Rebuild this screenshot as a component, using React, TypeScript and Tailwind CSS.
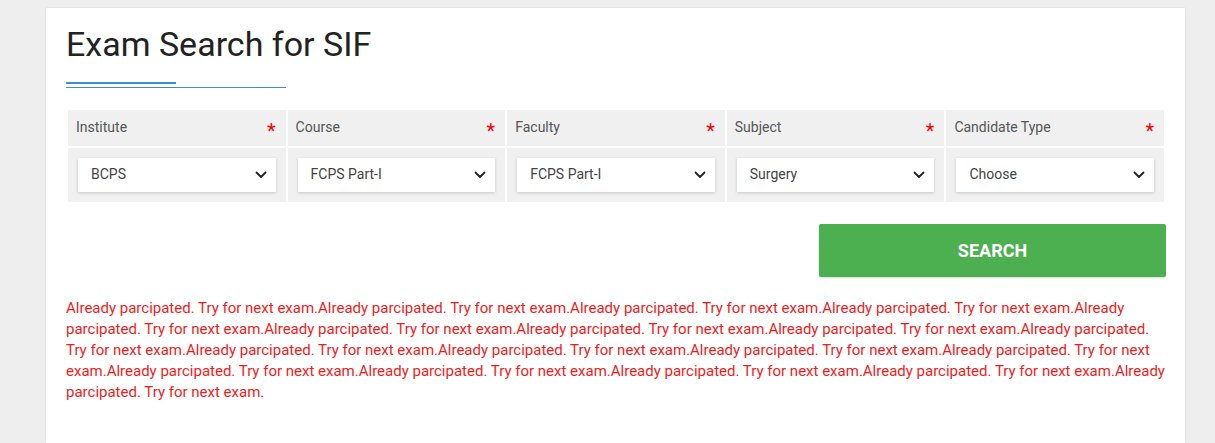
import React from "react";

const cols = [
  { label: "Institute", value: "BCPS" },
  { label: "Course", value: "FCPS Part-I" },
  { label: "Faculty", value: "FCPS Part-I" },
  { label: "Subject", value: "Surgery" },
  { label: "Candidate Type", value: "Choose" },
];

const msg = "Already parcipated. Try for next exam.".repeat(18);

function Chevron() {
  return (
    <svg width="12" height="8" viewBox="0 0 12 8" fill="none">
      <path d="M1.5 1.5 L6 6 L10.5 1.5" stroke="#222" strokeWidth="1.8" strokeLinecap="round" strokeLinejoin="round" />
    </svg>
  );
}

export default function App() {
  return (
    <div className="w-[1215px] h-[443px] bg-[#eeeeee] overflow-hidden" style={{ fontFamily: "Roboto, 'Liberation Sans', sans-serif" }}>
      <div className="ml-[46px] mt-[8px] w-[1139px] h-[435px] bg-white shadow-[0_0_2px_rgba(0,0,0,0.12)] pl-[20px] pr-[19px] pt-[16px]">
        <h1 className="text-[34px] leading-[40px] text-[#222] font-normal">Exam Search for SIF</h1>
        <div className="mt-[18px] flex flex-col">
          <div className="w-[110px] h-[1.5px] bg-[#3a8fd0]" />
          <div className="mt-[3px] w-[220px] h-[1.5px] bg-[#3a8fd0]" />
        </div>
        <div className="mt-[22px] ml-[2px] w-[1096px] grid grid-cols-5 gap-[2px]">
          {cols.map((c) => (
            <div key={c.label} className="h-[36px] bg-[#f0f0f0] flex items-center justify-between pl-[8px] pr-[10px] pb-[1px]">
              <span className="text-[14px] text-[#555]">{c.label}</span>
              <span className="text-[20px] leading-none text-[#ff0000] mt-[6px]">*</span>
            </div>
          ))}
          {cols.map((c) => (
            <div key={c.label + "v"} className="h-[54px] bg-[#f0f0f0] px-[10px] py-[10px]">
              <div className="h-[34px] bg-white shadow-[0_1px_3px_rgba(0,0,0,0.18)] flex items-center justify-between pl-[13px] pr-[9px] pb-[1px]">
                <span className="text-[14px] text-[#444]">{c.value}</span>
                <Chevron />
              </div>
            </div>
          ))}
        </div>
        <div className="mt-[22px] flex justify-end">
          <div className="w-[347px] h-[53px] bg-[#4caf50] rounded-[2px] flex items-center justify-center text-white font-bold text-[18px] shadow-[0_1px_2px_rgba(0,0,0,0.15)]">
            SEARCH
          </div>
        </div>
        <p className="mt-[21px] w-[1100px] text-[15px] leading-[21px] text-[#f01c1c]">{msg}</p>
      </div>
    </div>
  );
}
